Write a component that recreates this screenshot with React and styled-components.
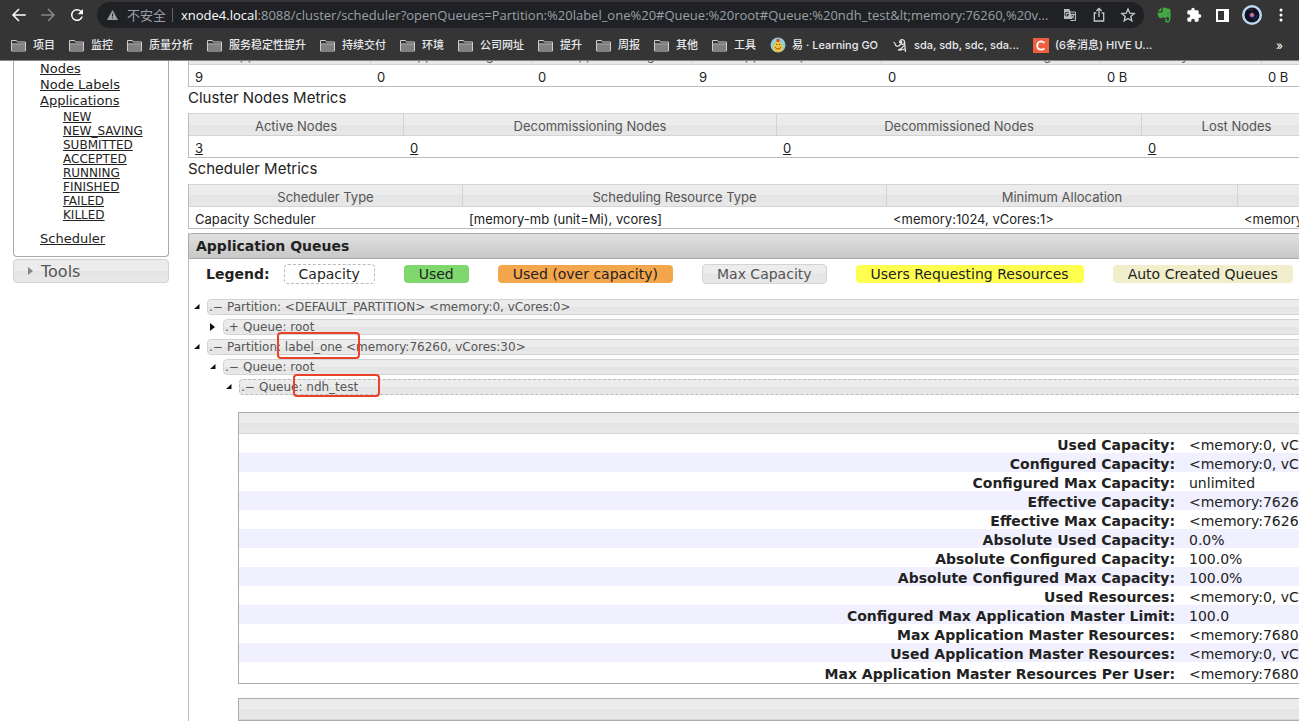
import React from "react";
import styled, { createGlobalStyle, css } from "styled-components";

const verdana = `"DejaVu Sans", Verdana, sans-serif`;
const ui = `Inter, "Noto Sans CJK SC", sans-serif`;
const address = `"Open Sans", "Noto Sans CJK SC", sans-serif`;
const barFill = "linear-gradient(#ececec 50%, #e4e4e4 50%, #e8e8e8)";

const GlobalStyle = createGlobalStyle`
  *, *::before, *::after { box-sizing: border-box; }
  html, body { margin: 0; background: #fff; }
  body { font-family: ${verdana}; color: #222; }
`;

/* ---------- Window ---------- */

const Window = styled.div`
  display: flex;
  flex-direction: column;
  height: 100vh;
  overflow: hidden;
`;

const Chrome = styled.header`
  flex: none;
  background: #353535;
  border-bottom: 1px solid #858585;
  font-family: ${ui};
`;

const Toolbar = styled.div`
  display: flex;
  align-items: center;
  height: 30px;
  padding: 0 4px 0 11px;
`;

const IconButton = styled.button`
  display: flex;
  align-items: center;
  justify-content: center;
  flex: none;
  width: 29px;
  height: 26px;
  padding: 0;
  border: 0;
  background: none;
  color: ${(p) => p.$color || "#fff"};
`;

const NavGroup = styled.div`
  display: flex;
  margin-right: 6px;
  margin-left: -7px;
`;

const AddressBar = styled.div`
  display: flex;
  align-items: center;
  flex: 1;
  min-width: 0;
  height: 26px;
  margin-right: 6px;
  padding: 0 2px 0 10px;
  border-radius: 13px;
  background: #202124;
  font-family: ${address};
  font-size: 13px;
  color: #9aa0a6;
`;

const Insecure = styled.span`
  display: flex;
  align-items: center;
  gap: 9px;
  flex: none;
  margin-right: 8px;
  padding-right: 6px;
  border-right: 1px solid #5f6368;
  line-height: 14px;
`;

const Host = styled.label`
  flex: none;
  line-height: 18px;
  color: #fff;
`;

const UrlInput = styled.input`
  flex: 1;
  min-width: 0;
  height: 18px;
  padding: 0;
  border: 0;
  outline: 0;
  background: none;
  color: #9aa0a6;
  font: inherit;
`;

const Bookmarks = styled.nav`
  display: flex;
  align-items: center;
  gap: 14px;
  height: 30px;
  padding: 0 16px 0 11px;
`;

const Bookmark = styled.a`
  display: flex;
  align-items: center;
  gap: 6px;
  flex: none;
  color: #e8eaed;
  font-size: 11px;
  font-weight: 500;
  line-height: 16px;
  text-decoration: none;
  white-space: nowrap;
`;

const More = styled.button`
  margin-left: auto;
  padding: 0;
  border: 0;
  background: none;
  color: #fff;
  font-family: ${ui};
  font-size: 12px;
`;

/* ---------- Page ---------- */

const Page = styled.div`
  display: flex;
  align-items: flex-start;
  flex: 1;
  gap: 19px;
  min-height: 0;
  padding-left: 13px;
  overflow: hidden;
`;

const Sidebar = styled.aside`
  flex: none;
  width: 156px;
`;

const SideSection = styled.nav`
  padding: 0 0 9px 26px;
  border: 1px solid #aaa;
  border-top: 0;
  border-radius: 0 0 4px 4px;
  font-size: 13px;
  line-height: 16px;
`;

const LinkList = styled.ul`
  margin: 0;
  padding: 0;
  list-style: none;
`;

const SubList = styled(LinkList)`
  padding: 1px 0 9px 23px;
  font-size: 12px;
  line-height: 14px;
`;

const SideLink = styled.a`
  color: #222;
`;

const ToolsButton = styled.button`
  display: flex;
  align-items: center;
  gap: 8px;
  width: 100%;
  height: 24px;
  margin-top: 2px;
  padding: 0 14px;
  border: 1px solid #d3d3d3;
  border-radius: 4px;
  background: ${barFill};
  color: #555;
  font-family: ${verdana};
  font-size: 16px;
`;

const Main = styled.main`
  flex: none;
  width: 100%;
  min-width: 1940px;
`;

const ScrolledTop = styled.div`
  margin-top: -19px;
`;

const Metrics = styled.table`
  width: 100%;
  table-layout: fixed;
  border-collapse: separate;
  border-spacing: 0;
  border: 1px solid #bbb;
  border-top: 0;
  font-family: ${ui};
  font-size: 13px;
  line-height: 16px;
`;

const MetricHead = styled.th`
  height: 23px;
  padding: 2px 6px 0;
  border: 1px solid #d3d3d3;
  border-left: 0;
  background: ${barFill};
  color: #555;
  font-weight: 400;
`;

const MetricCell = styled.td`
  height: 21px;
  padding: 2px 6px 0;
  white-space: nowrap;
  a { color: #222; }
`;

const SectionTitle = styled.h3`
  margin: 0;
  height: 26px;
  font-family: ${ui};
  font-size: 15px;
  font-weight: 400;
  line-height: 22px;
`;

const Queues = styled.section`
  margin-top: 4px;
  border-left: 1px solid #bbb;
`;

const QueuesTitle = styled.h3`
  height: 26px;
  margin: 0 0 0 -1px;
  padding: 0 7px;
  border: 1px solid #aaa;
  border-radius: 4px 4px 0 0;
  background: linear-gradient(#e0e0e0, #c8c8c8);
  font-size: 14px;
  font-weight: 700;
  line-height: 24px;
`;

const Legend = styled.div`
  display: flex;
  align-items: center;
  gap: 29px;
  height: 30px;
  padding-left: 17px;
  font-size: 14px;
  white-space: nowrap;
`;

const LegendLabel = styled.b`
  margin-right: -15px;
`;

const Chip = styled.span`
  height: 18px;
  padding: 0 15px;
  border-radius: 4px;
  line-height: 18px;
  background: ${(p) => p.$fill || "#fff"};
  ${(p) => p.$border && css`
    height: 20px;
    border: 1px ${p.$border};
    padding: 0 14px;
  `}
  ${(p) => p.$muted && css`
    color: #555;
  `}
`;

const Tree = styled.ul`
  display: flex;
  flex-direction: column;
  gap: 4px;
  margin: 0;
  padding: 10px 0 0 4px;
  list-style: none;
`;

const TreeItem = styled.li`
  display: flex;
  align-items: center;
  position: relative;
  height: 16px;
  padding-left: ${(p) => p.$level * 16}px;
`;

const Toggle = styled.button`
  flex: none;
  display: flex;
  width: 14px;
  padding: 0 0 0 1px;
  border: 0;
  background: none;
`;

const TreeBar = styled.a`
  flex: 1;
  height: 16px;
  padding-left: 1px;
  border: 1px ${(p) => (p.$dashed ? "dashed #bbb" : "solid #d3d3d3")};
  border-radius: 4px;
  background: ${barFill};
  color: #555;
  font-size: 12px;
  line-height: 15px;
  text-decoration: none;
  white-space: pre;
`;

const Sign = styled.span`
  display: inline-block;
  width: 18px;
`;

const Highlight = styled.span`
  position: absolute;
  top: ${(p) => p.$top}px;
  left: ${(p) => p.$left}px;
  width: ${(p) => p.$width}px;
  height: ${(p) => p.$height}px;
  border: 2px solid #ea4228;
  border-radius: 4px;
`;

const Info = styled.table`
  width: 1888px;
  margin: ${(p) => p.$gap}px 0 0 49px;
  table-layout: fixed;
  border-collapse: separate;
  border-spacing: 0;
  border: 1px solid #aaa;
  font-size: 14px;
  line-height: 16px;
`;

const InfoCaption = styled.th`
  height: 21px;
  padding: 0;
  border-bottom: 1px solid #d3d3d3;
  background: ${barFill};
`;

const InfoRow = styled.tr`
  height: 19px;
  background: ${(p) => (p.$striped ? "#f0f0ff" : "#fff")};
  &:last-child { height: 21px; }
`;

const InfoName = styled.th`
  width: 50%;
  padding: 3px 7px 0;
  text-align: right;
`;

const InfoValue = styled.td`
  padding: 3px 7px 0;
`;

/* ---------- Icons ---------- */

const Stroke = ({ size = 18, children, width = 2 }) => (
  <svg width={size} height={size} viewBox="0 0 24 24" fill="none" stroke="currentColor" strokeWidth={width}>
    {children}
  </svg>
);

const Back = () => <Stroke><path d="M21 12H4M12 4l-8 8 8 8" /></Stroke>;
const Forward = () => <Stroke><path d="M3 12h17M12 4l8 8-8 8" /></Stroke>;
const Reload = () => (
  <svg width="18" height="18" viewBox="0 0 24 24" fill="currentColor">
    <path d="M17.7 6.3A8 8 0 1 0 19.8 14h-2.1A6 6 0 1 1 12 6c1.7 0 3.1.7 4.2 1.8L13 11h7V4z" />
  </svg>
);
const Warning = () => (
  <svg width="11" height="10" viewBox="0 0 22 20" fill="#9aa0a6">
    <path fillRule="evenodd" d="M11 0 22 20H0zM10 7v6h2V7zm0 8v2h2v-2z" />
  </svg>
);
const Folder = () => (
  <svg width="16" height="13" viewBox="0 0 16 13">
    <path d="M0.500 12V1.500h5l1 1.500h8V12z" fill="#353535" stroke="#cfcfcf" strokeLinejoin="round" />
    <path d="M1 5.500h13V12H1z" fill="#808080" />
    <path d="M1 5h13" stroke="#cfcfcf" />
  </svg>
);
const Translate = () => (
  <svg width="14" height="14" viewBox="0 0 28 28">
    <path d="M12 8h13v17H15" fill="none" stroke="#b8bcc0" strokeWidth="2" />
    <path d="M2 2h11l6 20H2z" fill="#b8bcc0" />
    <path d="M11 9H8.500A3.500 3.500 0 1 0 11 13H8" fill="none" stroke="#202124" strokeWidth="2" />
    <path d="M16 13h8M20 11v2M22 13q-1 5-5 7M18 15q2 4 5 6" fill="none" stroke="#b8bcc0" strokeWidth="2" />
  </svg>
);
const Share = () => (
  <Stroke size={16}><path d="M8 9H5v12h14V9h-3M12 15V3M8 6l4-4 4 4" /></Stroke>
);
const Star = () => (
  <Stroke size={16}><path d="m12 3 2.600 6.200 6.700.6-5.100 4.400 1.500 6.500-5.700-3.500-5.700 3.500 1.500-6.500-5.100-4.400 6.700-.6z" /></Stroke>
);
const Elephant = () => (
  <svg width="15" height="16" viewBox="0 0 24 26" fill="#43a843">
    <path d="M7 1v5q0 1-1 1H1zM9 1q3-1 6 1l5 1q2 1 2 9 0 12-3 13h-4q-3-1-2-5 1-1 3-1v2q-1 0-1 1l3 1q2-1 1-6l-2-1q-4 3-6 2l-1-2q-1 3-5 2Q1 17 1 9h6q2 0 2-2z" />
    <path d="M16 10q2-1 3 2z" fill="#353535" />
  </svg>
);
const Puzzle = () => (
  <svg width="16" height="16" viewBox="0 0 24 24" fill="#fff">
    <path d="M20.500 11H19V7a2 2 0 0 0-2-2h-4V3.500a2.500 2.500 0 0 0-5 0V5H4a2 2 0 0 0-2 2v3.800h1.500a2.700 2.700 0 0 1 0 5.400H2V20a2 2 0 0 0 2 2h3.800v-1.500a2.700 2.700 0 0 1 5.400 0V22H17a2 2 0 0 0 2-2v-4h1.500a2.500 2.500 0 0 0 0-5z" />
  </svg>
);
const SidePanel = () => (
  <svg width="13" height="13" viewBox="0 0 13 13">
    <path fill="#fff" fillRule="evenodd" d="M0 0h13v13H0zM2 2v9h6V2z" />
  </svg>
);
const Avatar = () => (
  <svg width="20" height="20" viewBox="0 0 20 20">
    <circle cx="10" cy="10" r="10" fill="#bcd7f5" />
    <circle cx="10" cy="10" r="7.500" fill="#11111d" />
    <path d="M6 5q3-2 5 0M11 15q4-1 4-5" stroke="#35354c" fill="none" />
    <circle cx="10" cy="10" r="2.600" fill="#4b49c8" />
    <circle cx="10" cy="10" r="1.700" fill="#f07a5c" />
  </svg>
);
const Dots = () => (
  <svg width="4" height="14" viewBox="0 0 4 14" fill="#fff">
    <circle cx="2" cy="2" r="1.500" /><circle cx="2" cy="7" r="1.500" /><circle cx="2" cy="12" r="1.500" />
  </svg>
);
const Gopher = () => (
  <svg width="16" height="16" viewBox="0 0 16 16">
    <circle cx="8" cy="8" r="7.500" fill="#8fd0dc" />
    <path d="M5.500 5q2.500-4 5 0l2.500 5q.5 5-5 5t-5-5z" fill="#efc23f" />
    <path d="M6 3q2-3 4 0l-1 2H7z" fill="#d8522e" />
    <path d="M5 10q1 2 3 2t3-2M6 7.500h1.500M9 7.500h1.500" stroke="#8c5a1e" fill="none" />
  </svg>
);
const Scribble = () => (
  <svg width="16" height="15" viewBox="0 0 32 30" fill="none" stroke="#e8eaed" strokeWidth="2.500">
    <path d="M3 8q3 1 4 6 2 4 6 2 5-3 7-8M15 10q0-6 5-7 6 1 5 7-2 4-6 2-3-3 1-6M25 8q1 10 2 20M24 15q-4 7-12 9 6 1 14-2" />
  </svg>
);
const CMark = () => (
  <svg width="16" height="15" viewBox="0 0 16 15">
    <path d="M0 0h16v15H0z" fill="#ed5f3f" />
    <path d="M11.500 5Q10 3.300 8 3.300 4.300 3.600 4.200 7.500q.1 4 3.800 4.200 2 0 3.500-1.400" fill="none" stroke="#fff" strokeWidth="1.800" />
  </svg>
);
const ArrowOpen = () => (
  <svg width="6" height="8" viewBox="0 0 6 8"><path d="M5.500 1v5H0z" fill="#111" /></svg>
);
const ArrowClosed = ({ fill = "#111" }) => (
  <svg width="5" height="8" viewBox="0 0 5 8"><path d="M0 0l5 4-5 4z" fill={fill} /></svg>
);

/* ---------- Data ---------- */

const folders = ["项目", "监控", "质量分析", "服务稳定性提升", "持续交付", "环境", "公司网址", "提升", "周报", "其他", "工具"];
const sites = [
  [Gopher, "易 · Learning GO"],
  [Scribble, "sda, sdb, sdc, sda..."],
  [CMark, "(6条消息) HIVE U..."],
];
const url = ":8088/cluster/scheduler?openQueues=Partition:%20label_one%20#Queue:%20root#Queue:%20ndh_test&lt;memory:76260,%20v...";
const states = ["NEW", "NEW_SAVING", "SUBMITTED", "ACCEPTED", "RUNNING", "FINISHED", "FAILED", "KILLED"];

const clusterMetrics = [
  ["Apps Submitted", "9", 182], ["Apps Pending", "0", 161], ["Apps Running", "0", 161],
  ["Apps Completed", "9", 189], ["Containers Running", "0", 219], ["Memory Used", "0 B", 161],
  ["Memory Total", "0 B", 176], ["Memory Reserved", "0 B"],
];
const nodeMetrics = [
  ["Active Nodes", "3", 215], ["Decommissioning Nodes", "0", 373], ["Decommissioned Nodes", "0", 365],
  ["Lost Nodes", "0", 190], ["Unhealthy Nodes", "0"],
];
const schedulerMetrics = [
  ["Scheduler Type", "Capacity Scheduler", 274],
  ["Scheduling Resource Type", "[memory-mb (unit=Mi), vcores]", 424],
  ["Minimum Allocation", "<memory:1024, vCores:1>", 351],
  ["Maximum Allocation", "<memory:8192, vCores:4>"],
];

const tree = [
  { level: 0, open: true, text: "Partition: <DEFAULT_PARTITION> <memory:0, vCores:0>" },
  { level: 1, open: false, text: "Queue: root" },
  { level: 0, open: true, text: "Partition: label_one <memory:76260, vCores:30>", mark: { $top: -7, $left: 84, $width: 83, $height: 27 } },
  { level: 1, open: true, text: "Queue: root" },
  { level: 2, open: true, dashed: true, text: "Queue: ndh_test", mark: { $top: -5, $left: 100, $width: 87, $height: 23 } },
];

const info = [
  ["Used Capacity:", "<memory:0, vCores:0> (0.0%)"],
  ["Configured Capacity:", "<memory:0, vCores:0>"],
  ["Configured Max Capacity:", "unlimited"],
  ["Effective Capacity:", "<memory:76260, vCores:30> (100.0%)"],
  ["Effective Max Capacity:", "<memory:76260, vCores:30> (100.0%)"],
  ["Absolute Used Capacity:", "0.0%"],
  ["Absolute Configured Capacity:", "100.0%"],
  ["Absolute Configured Max Capacity:", "100.0%"],
  ["Used Resources:", "<memory:0, vCores:0>"],
  ["Configured Max Application Master Limit:", "100.0"],
  ["Max Application Master Resources:", "<memory:76800, vCores:1>"],
  ["Used Application Master Resources:", "<memory:0, vCores:0>"],
  ["Max Application Master Resources Per User:", "<memory:76800, vCores:1>"],
];

/* ---------- Parts ---------- */

const MetricsTable = ({ columns, linked }) => (
  <Metrics>
    <colgroup>
      {columns.map(([name, , width]) => <col key={name} width={width} />)}
    </colgroup>
    <thead>
      <tr>{columns.map(([name]) => <MetricHead key={name}>{name}</MetricHead>)}</tr>
    </thead>
    <tbody>
      <tr>
        {columns.map(([name, value]) => (
          <MetricCell key={name}>{linked ? <a href="#nodes">{value}</a> : value}</MetricCell>
        ))}
      </tr>
    </tbody>
  </Metrics>
);

const Item = ({ href, children }) => <li><SideLink href={href}>{children}</SideLink></li>;

export default function App() {
  return (
    <Window>
      <GlobalStyle />
      <Chrome>
        <Toolbar>
          <NavGroup>
            <IconButton aria-label="Back"><Back /></IconButton>
            <IconButton aria-label="Forward" $color="#85878a"><Forward /></IconButton>
            <IconButton aria-label="Reload"><Reload /></IconButton>
          </NavGroup>
          <AddressBar>
            <Insecure><Warning />不安全</Insecure>
            <Host htmlFor="url">xnode4.local</Host>
            <UrlInput id="url" defaultValue={url} />
            <IconButton aria-label="Translate"><Translate /></IconButton>
            <IconButton aria-label="Share" $color="#c4c7c9"><Share /></IconButton>
            <IconButton aria-label="Bookmark this page" $color="#c4c7c9"><Star /></IconButton>
          </AddressBar>
          <IconButton aria-label="Evernote"><Elephant /></IconButton>
          <IconButton aria-label="Extensions"><Puzzle /></IconButton>
          <IconButton aria-label="Side panel"><SidePanel /></IconButton>
          <IconButton aria-label="Profile"><Avatar /></IconButton>
          <IconButton aria-label="Menu"><Dots /></IconButton>
        </Toolbar>
        <Bookmarks>
          {folders.map((name) => <Bookmark key={name} href="#folder"><Folder />{name}</Bookmark>)}
          {sites.map(([Icon, name]) => <Bookmark key={name} href="#site"><Icon />{name}</Bookmark>)}
          <More aria-label="More bookmarks">»</More>
        </Bookmarks>
      </Chrome>

      <Page>
        <Sidebar>
          <SideSection>
            <LinkList>
              <Item href="#nodes">Nodes</Item>
              <Item href="#labels">Node Labels</Item>
              <li>
                <SideLink href="#apps">Applications</SideLink>
                <SubList>
                  {states.map((s) => <Item key={s} href={`#${s}`}>{s}</Item>)}
                </SubList>
              </li>
              <Item href="#scheduler">Scheduler</Item>
            </LinkList>
          </SideSection>
          <ToolsButton><ArrowClosed fill="#888" />Tools</ToolsButton>
        </Sidebar>

        <Main>
          <ScrolledTop><MetricsTable columns={clusterMetrics} /></ScrolledTop>
          <SectionTitle>Cluster Nodes Metrics</SectionTitle>
          <MetricsTable columns={nodeMetrics} linked />
          <SectionTitle>Scheduler Metrics</SectionTitle>
          <MetricsTable columns={schedulerMetrics} />

          <Queues>
            <QueuesTitle>Application Queues</QueuesTitle>
            <Legend>
              <LegendLabel>Legend:</LegendLabel>
              <Chip $border="dashed #bbb">Capacity</Chip>
              <Chip $fill="#7ed86d">Used</Chip>
              <Chip $fill="#f4a64c">Used (over capacity)</Chip>
              <Chip $border="solid #d3d3d3" $muted $fill={barFill}>Max Capacity</Chip>
              <Chip $fill="#ffff50">Users Requesting Resources</Chip>
              <Chip $fill="#f0eecb">Auto Created Queues</Chip>
            </Legend>
            <Tree>
              {tree.map((node, i) => (
                <TreeItem key={i} $level={node.level}>
                  <Toggle aria-label={node.open ? "Collapse" : "Expand"}>
                    {node.open ? <ArrowOpen /> : <ArrowClosed />}
                  </Toggle>
                  <TreeBar href="#queue" $dashed={node.dashed}>
                    <Sign>{node.open ? ".−" : ".+"}</Sign>{node.text}
                  </TreeBar>
                  {node.mark && <Highlight {...node.mark} />}
                </TreeItem>
              ))}
            </Tree>
            <Info $gap={17}>
              <thead><tr><InfoCaption colSpan={2} /></tr></thead>
              <tbody>
                {info.map(([name, value], i) => (
                  <InfoRow key={name} $striped={i % 2 === 1}>
                    <InfoName scope="row">{name}</InfoName>
                    <InfoValue>{value}</InfoValue>
                  </InfoRow>
                ))}
              </tbody>
            </Info>
            <Info $gap={14}>
              <thead><tr><InfoCaption colSpan={2} /></tr></thead>
            </Info>
          </Queues>
        </Main>
      </Page>
    </Window>
  );
}
